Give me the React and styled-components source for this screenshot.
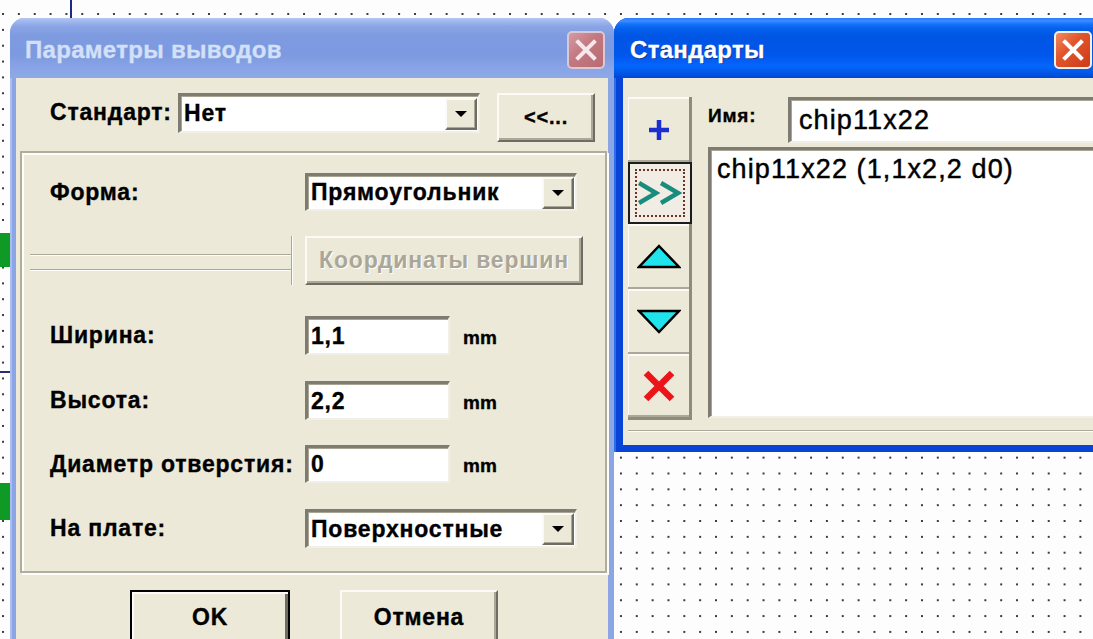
import React from "react";
import styled, { createGlobalStyle } from "styled-components";

const Global = createGlobalStyle`
  html, body { margin: 0; padding: 0; overflow: hidden; }
  body { font-family: "Liberation Sans", Arial, sans-serif; background: #fff; }
`;

const FONT = `"Liberation Sans", Arial, sans-serif`;

/* ---------- editor canvas ---------- */
const Canvas = styled.div`
  position: relative;
  width: 1093px;
  height: 639px;
  overflow: hidden;
  background-color: #fdfdfd;
  background-image: radial-gradient(circle at center, #3a3a3a 0 0.9px, transparent 1.4px);
  background-size: 15.85px 15.85px;
  background-position: -4.9px 6.1px;
`;

const Mark = styled.div`
  position: absolute;
  left: ${(p) => p.$x}px;
  top: ${(p) => p.$y}px;
  width: ${(p) => p.$w}px;
  height: ${(p) => p.$h}px;
  background: ${(p) => p.$c};
`;

/* ---------- window chrome ---------- */
const Win = styled.div`
  position: absolute;
  left: ${(p) => p.$x}px;
  top: ${(p) => p.$y}px;
  width: ${(p) => p.$w}px;
  height: ${(p) => p.$h}px;
  display: flex;
  flex-direction: column;
  border-radius: 15px 15px 0 0;
  overflow: hidden;
  background: ${(p) => (p.$active ? "#0845d6" : "#8ba5e5")};
  box-shadow: ${(p) =>
    p.$active ? "inset 2px 0 0 #2f6ee8" : "inset 2px 0 0 #a9bdee"};
`;

const TitleBar = styled.div`
  flex: none;
  height: 60px;
  box-sizing: border-box;
  display: flex;
  align-items: center;
  justify-content: space-between;
  padding: 4px ${(p) => p.$padR}px 0 ${(p) => p.$padL}px;
  background: ${(p) =>
    p.$active
      ? `linear-gradient(to bottom, #2a7cff 0%, #3b8dff 5%, #1672fa 10%, #0460ee 18%, #0155e4 30%, #0156eb 60%, #035ef5 72%, #0566fb 80%, #0159ea 90%, #0047cf 100%)`
      : `linear-gradient(to bottom, #b3c6f2 0%, #9fb6ee 6%, #8aa5e6 14%, #7e9be0 30%, #7d9ae0 62%, #87a3e5 80%, #8fa9e7 100%)`};
`;

const TitleText = styled.span`
  font: bold 24px ${FONT};
  letter-spacing: 0.3px;
  -webkit-text-stroke: 0.3px currentColor;
  color: ${(p) => (p.$active ? "#ffffff" : "#d3e0f7")};
  text-shadow: ${(p) => (p.$active ? "1px 1px 0 #0a2c8c" : "none")};
`;

const CloseBtn = styled.div`
  width: 38px;
  height: 38px;
  box-sizing: border-box;
  border-radius: 5px;
  border: 2px solid ${(p) => (p.$active ? "#f4f0ee" : "#d9c9d6")};
  background: ${(p) =>
    p.$active
      ? "linear-gradient(135deg, #f08a62 0%, #e2562c 40%, #cc3b17 100%)"
      : "linear-gradient(135deg, #d69aa4 0%, #c3787f 45%, #b86b74 100%)"};
  display: grid;
  place-items: center;
`;

const Body = styled.div`
  flex: 1;
  margin: 0 ${(p) => p.$side}px ${(p) => p.$bottom}px;
  background: #ece9d8;
  display: flex;
  flex-direction: column;
  min-height: 0;
`;

/* ---------- common controls ---------- */
const Label = styled.span`
  font: bold ${(p) => p.$size || 23}px ${FONT};
  letter-spacing: 0.8px;
  -webkit-text-stroke: 0.35px #000;
  color: #000;
  white-space: nowrap;
`;

const Unit = styled.span`
  font: bold 19px ${FONT};
  -webkit-text-stroke: 0.35px #000;
  color: #000;
  margin-left: 13px;
  padding-top: 4px;
`;

const Sunken = styled.div`
  box-sizing: border-box;
  width: ${(p) => (p.$w ? `${p.$w}px` : "auto")};
  height: ${(p) => p.$h}px;
  background: #fff;
  border-style: solid;
  border-width: 3px 2px 2px 3px;
  border-color: #7e7c70 #f1efe6 #f1efe6 #7e7c70;
  box-shadow: inset 1px 1px 0 #a8a595;
  display: flex;
  align-items: center;
  justify-content: space-between;
  padding: 0 1px 0 3px;
  font: bold 23px ${FONT};
  letter-spacing: 0.8px;
  -webkit-text-stroke: 0.35px #000;
  color: #000;
`;

const ArrowBtn = styled.div`
  flex: none;
  width: 32px;
  height: 32px;
  box-sizing: border-box;
  background: #ece9d8;
  border: 2px solid;
  border-color: #fbfaf6 #6f6d62 #6f6d62 #fbfaf6;
  box-shadow: inset -1px -1px 0 #aca899;
  display: grid;
  place-items: center;
  &::after {
    content: "";
    border-left: 6px solid transparent;
    border-right: 6px solid transparent;
    border-top: 6px solid #000;
  }
`;

const Button = styled.div`
  box-sizing: border-box;
  width: ${(p) => p.$w}px;
  height: ${(p) => p.$h}px;
  background: #ece9d8;
  border: 2px solid;
  border-color: ${(p) =>
    p.$default ? "#000" : "#fbfaf6 #6f6d62 #6f6d62 #fbfaf6"};
  box-shadow: ${(p) =>
    p.$default
      ? "inset 2px 2px 0 #fbfaf6, inset -3px -3px 0 #6f6d62"
      : "inset -2px -2px 0 #aca899"};
  display: flex;
  align-items: center;
  justify-content: center;
  font: bold ${(p) => p.$size || 23}px ${FONT};
  letter-spacing: 0.8px;
  -webkit-text-stroke: ${(p) => (p.$disabled ? "0" : "0.35px #000")};
  color: ${(p) => (p.$disabled ? "#aaa799" : "#000")};
  text-shadow: ${(p) => (p.$disabled ? "1px 1px 0 #fff" : "none")};
`;

/* ---------- pad parameters dialog ---------- */
const TopRow = styled.div`
  flex: none;
  height: 73px;
  box-sizing: border-box;
  display: flex;
  align-items: flex-start;
  padding: 15px 0 0 34px;
  & > ${Label} {
    width: 128px;
    padding-top: 6px;
  }
`;

const Panel = styled.div`
  flex: none;
  height: 422px;
  box-sizing: border-box;
  margin: 0 1px 0 4px;
  border: 2px solid #b0ad9d;
  box-shadow: inset 2px 2px 0 #fdfdf9, 2px 2px 0 #fdfdf9;
  padding: 0 0 0 28px;
  display: flex;
  flex-direction: column;
`;

const Row = styled.div`
  flex: none;
  height: ${(p) => p.$h}px;
  margin-top: ${(p) => p.$top}px;
  display: grid;
  grid-template-columns: 255px auto;
  align-items: center;
`;

const Inline = styled.div`
  display: flex;
  align-items: center;
  height: 100%;
`;

const Bevel = styled.div`
  width: 262px;
  height: 49px;
  margin-left: -20px;
  box-sizing: border-box;
  border-right: 1px solid #aca899;
  box-shadow: 1px 0 0 #fdfdf9;
  display: flex;
  flex-direction: column;
  gap: 14px;
  padding-top: 18px;
`;

const EtchLine = styled.div`
  height: 1px;
  background: #aca899;
  box-shadow: 0 1px 0 #fdfdf9;
  margin: ${(p) => p.$margin || 0};
`;

const BottomBar = styled.div`
  flex: none;
  display: flex;
  gap: 50px;
  padding: 17px 0 0 114px;
`;

/* ---------- standards dialog ---------- */
const StdMain = styled.div`
  flex: none;
  display: flex;
  gap: 16px;
  padding: 19px 0 0 5px;
`;

const Strip = styled.div`
  flex: none;
  width: 64px;
  box-sizing: border-box;
  border-right: 3px solid #8f8c7e;
  border-bottom: 3px solid #8f8c7e;
  box-shadow: inset 1px 0 0 #fbfaf6;
  display: flex;
  flex-direction: column;
`;

const StripBtn = styled.div`
  height: ${(p) => p.$h}px;
  box-sizing: border-box;
  display: grid;
  place-items: center;
  border-top: 2px solid #fbfaf6;
  border-bottom: 2px solid #aca899;
  ${(p) =>
    p.$pressed &&
    `
    margin-right: -3px;
    border: 2px solid #1c1c1c;
    background: #f2ede4;
    padding: 5px;
  `}
`;

const Focus = styled.div`
  width: 100%;
  height: 100%;
  box-sizing: border-box;
  border: 2px dotted #6b3424;
  display: grid;
  place-items: center;
`;

const StdRight = styled.div`
  flex: 1;
  display: flex;
  flex-direction: column;
  gap: 4px;
`;

const NameRow = styled.div`
  display: flex;
  align-items: flex-start;
  height: 46px;
  & > ${Label} {
    width: 80px;
    padding-top: 8px;
  }
`;

const BigText = styled.span`
  font: 27px ${FONT};
  letter-spacing: 1.1px;
  -webkit-text-stroke: 0.45px #000;
  color: #000;
  white-space: nowrap;
`;

const NameInput = styled(Sunken)`
  flex: 1;
  height: 46px;
  padding-left: 8px;
  justify-content: flex-start;
`;

const ListBox = styled.div`
  height: 271px;
  box-sizing: border-box;
  background: #fff;
  border-style: solid;
  border-width: 3px 2px 2px 3px;
  border-color: #7e7c70 #f1efe6 #f1efe6 #7e7c70;
  box-shadow: inset 1px 1px 0 #a8a595;
  padding: 4px 0 0 6px;
`;

/* ---------- icons ---------- */
const CloseGlyph = ({ color }) => (
  <svg width="22" height="22" viewBox="0 0 22 22">
    <path d="M3 3 L19 19 M19 3 L3 19" stroke={color} strokeWidth="4" strokeLinecap="square" />
  </svg>
);

const PlusIcon = () => (
  <svg width="26" height="26" viewBox="0 0 26 26">
    <path d="M13 3 V23 M3 13 H23" stroke="#1b2fd1" strokeWidth="4.5" />
  </svg>
);

const ForwardIcon = () => (
  <svg width="44" height="26" viewBox="0 0 44 26">
    <path d="M1 3 L18 13 L1 23 M23 3 L40 13 L23 23" fill="none" stroke="#1a8c7e" strokeWidth="4.5" strokeLinejoin="miter" />
  </svg>
);

const TriangleIcon = ({ down }) => (
  <svg width="44" height="26" viewBox="0 0 44 26">
    <path
      d={down ? "M2 2 H42 L22 23 Z" : "M22 2 L42 23 H2 Z"}
      fill="#1fe4ec"
      stroke="#000"
      strokeWidth="2.5"
      strokeLinejoin="miter"
    />
  </svg>
);

const DeleteIcon = () => (
  <svg width="34" height="32" viewBox="0 0 34 32">
    <path d="M4 3 L30 29 M30 3 L4 29" stroke="#ea1419" strokeWidth="6.5" />
  </svg>
);

function PadParameters() {
  return (
    <Win $x={10} $y={18} $w={604} $h={700}>
      <TitleBar $padL={15} $padR={9}>
        <TitleText>Параметры выводов</TitleText>
        <CloseBtn>
          <CloseGlyph color="#f4e8ec" />
        </CloseBtn>
      </TitleBar>
      <Body $side={6} $bottom={0}>
        <TopRow>
          <Label>Стандарт:</Label>
          <Sunken $w={302} $h={40}>
            <span>Нет</span>
            <ArrowBtn />
          </Sunken>
          <Button $w={98} $h={49} $size={20} style={{ marginLeft: 17 }}>
            {"<<..."}
          </Button>
        </TopRow>

        <Panel>
          <Row $top={20} $h={38}>
            <Label>Форма:</Label>
            <Sunken $w={272} $h={38}>
              <span>Прямоугольник</span>
              <ArrowBtn />
            </Sunken>
          </Row>
          <Row $top={25} $h={49}>
            <Bevel>
              <EtchLine />
              <EtchLine />
            </Bevel>
            <Button $w={278} $h={49} $disabled>
              Координаты вершин
            </Button>
          </Row>
          <Row $top={31} $h={39}>
            <Label>Ширина:</Label>
            <Inline>
              <Sunken $w={145} $h={39}>1,1</Sunken>
              <Unit>mm</Unit>
            </Inline>
          </Row>
          <Row $top={26} $h={39}>
            <Label>Высота:</Label>
            <Inline>
              <Sunken $w={145} $h={39}>2,2</Sunken>
              <Unit>mm</Unit>
            </Inline>
          </Row>
          <Row $top={25} $h={38}>
            <Label>Диаметр отверстия:</Label>
            <Inline>
              <Sunken $w={145} $h={38}>0</Sunken>
              <Unit>mm</Unit>
            </Inline>
          </Row>
          <Row $top={26} $h={39}>
            <Label>На плате:</Label>
            <Sunken $w={272} $h={39}>
              <span>Поверхностные</span>
              <ArrowBtn />
            </Sunken>
          </Row>
        </Panel>

        <BottomBar>
          <Button $w={160} $h={54} $default>
            OK
          </Button>
          <Button $w={158} $h={54}>
            Отмена
          </Button>
        </BottomBar>
      </Body>
    </Win>
  );
}

function Standards() {
  return (
    <Win $x={614} $y={18} $w={492} $h={434} $active>
      <TitleBar $active $padL={16} $padR={14}>
        <TitleText $active>Стандарты</TitleText>
        <CloseBtn $active>
          <CloseGlyph color="#ffffff" />
        </CloseBtn>
      </TitleBar>
      <Body $side={9} $bottom={7}>
        <StdMain>
          <Strip>
            <StripBtn $h={65}>
              <PlusIcon />
            </StripBtn>
            <StripBtn $h={62} $pressed>
              <Focus>
                <ForwardIcon />
              </Focus>
            </StripBtn>
            <StripBtn $h={65}>
              <TriangleIcon />
            </StripBtn>
            <StripBtn $h={65}>
              <TriangleIcon down />
            </StripBtn>
            <StripBtn $h={63}>
              <DeleteIcon />
            </StripBtn>
          </Strip>
          <StdRight>
            <NameRow>
              <Label $size={19}>Имя:</Label>
              <NameInput>
                <BigText>chip11x22</BigText>
              </NameInput>
            </NameRow>
            <ListBox>
              <BigText>chip11x22 (1,1x2,2 d0)</BigText>
            </ListBox>
          </StdRight>
        </StdMain>
        <EtchLine $margin="10px 0 0 5px" />
      </Body>
    </Win>
  );
}

export default function App() {
  return (
    <>
      <Global />
      <Canvas>
        <Mark $x={70} $y={0} $w={2} $h={18} $c="#1d2a86" />
        <Mark $x={0} $y={233} $w={10} $h={34} $c="#0f9a26" />
        <Mark $x={0} $y={483} $w={10} $h={37} $c="#0f9a26" />
        <Mark $x={0} $y={371} $w={10} $h={2} $c="#28306e" />
        <PadParameters />
        <Standards />
      </Canvas>
    </>
  );
}
